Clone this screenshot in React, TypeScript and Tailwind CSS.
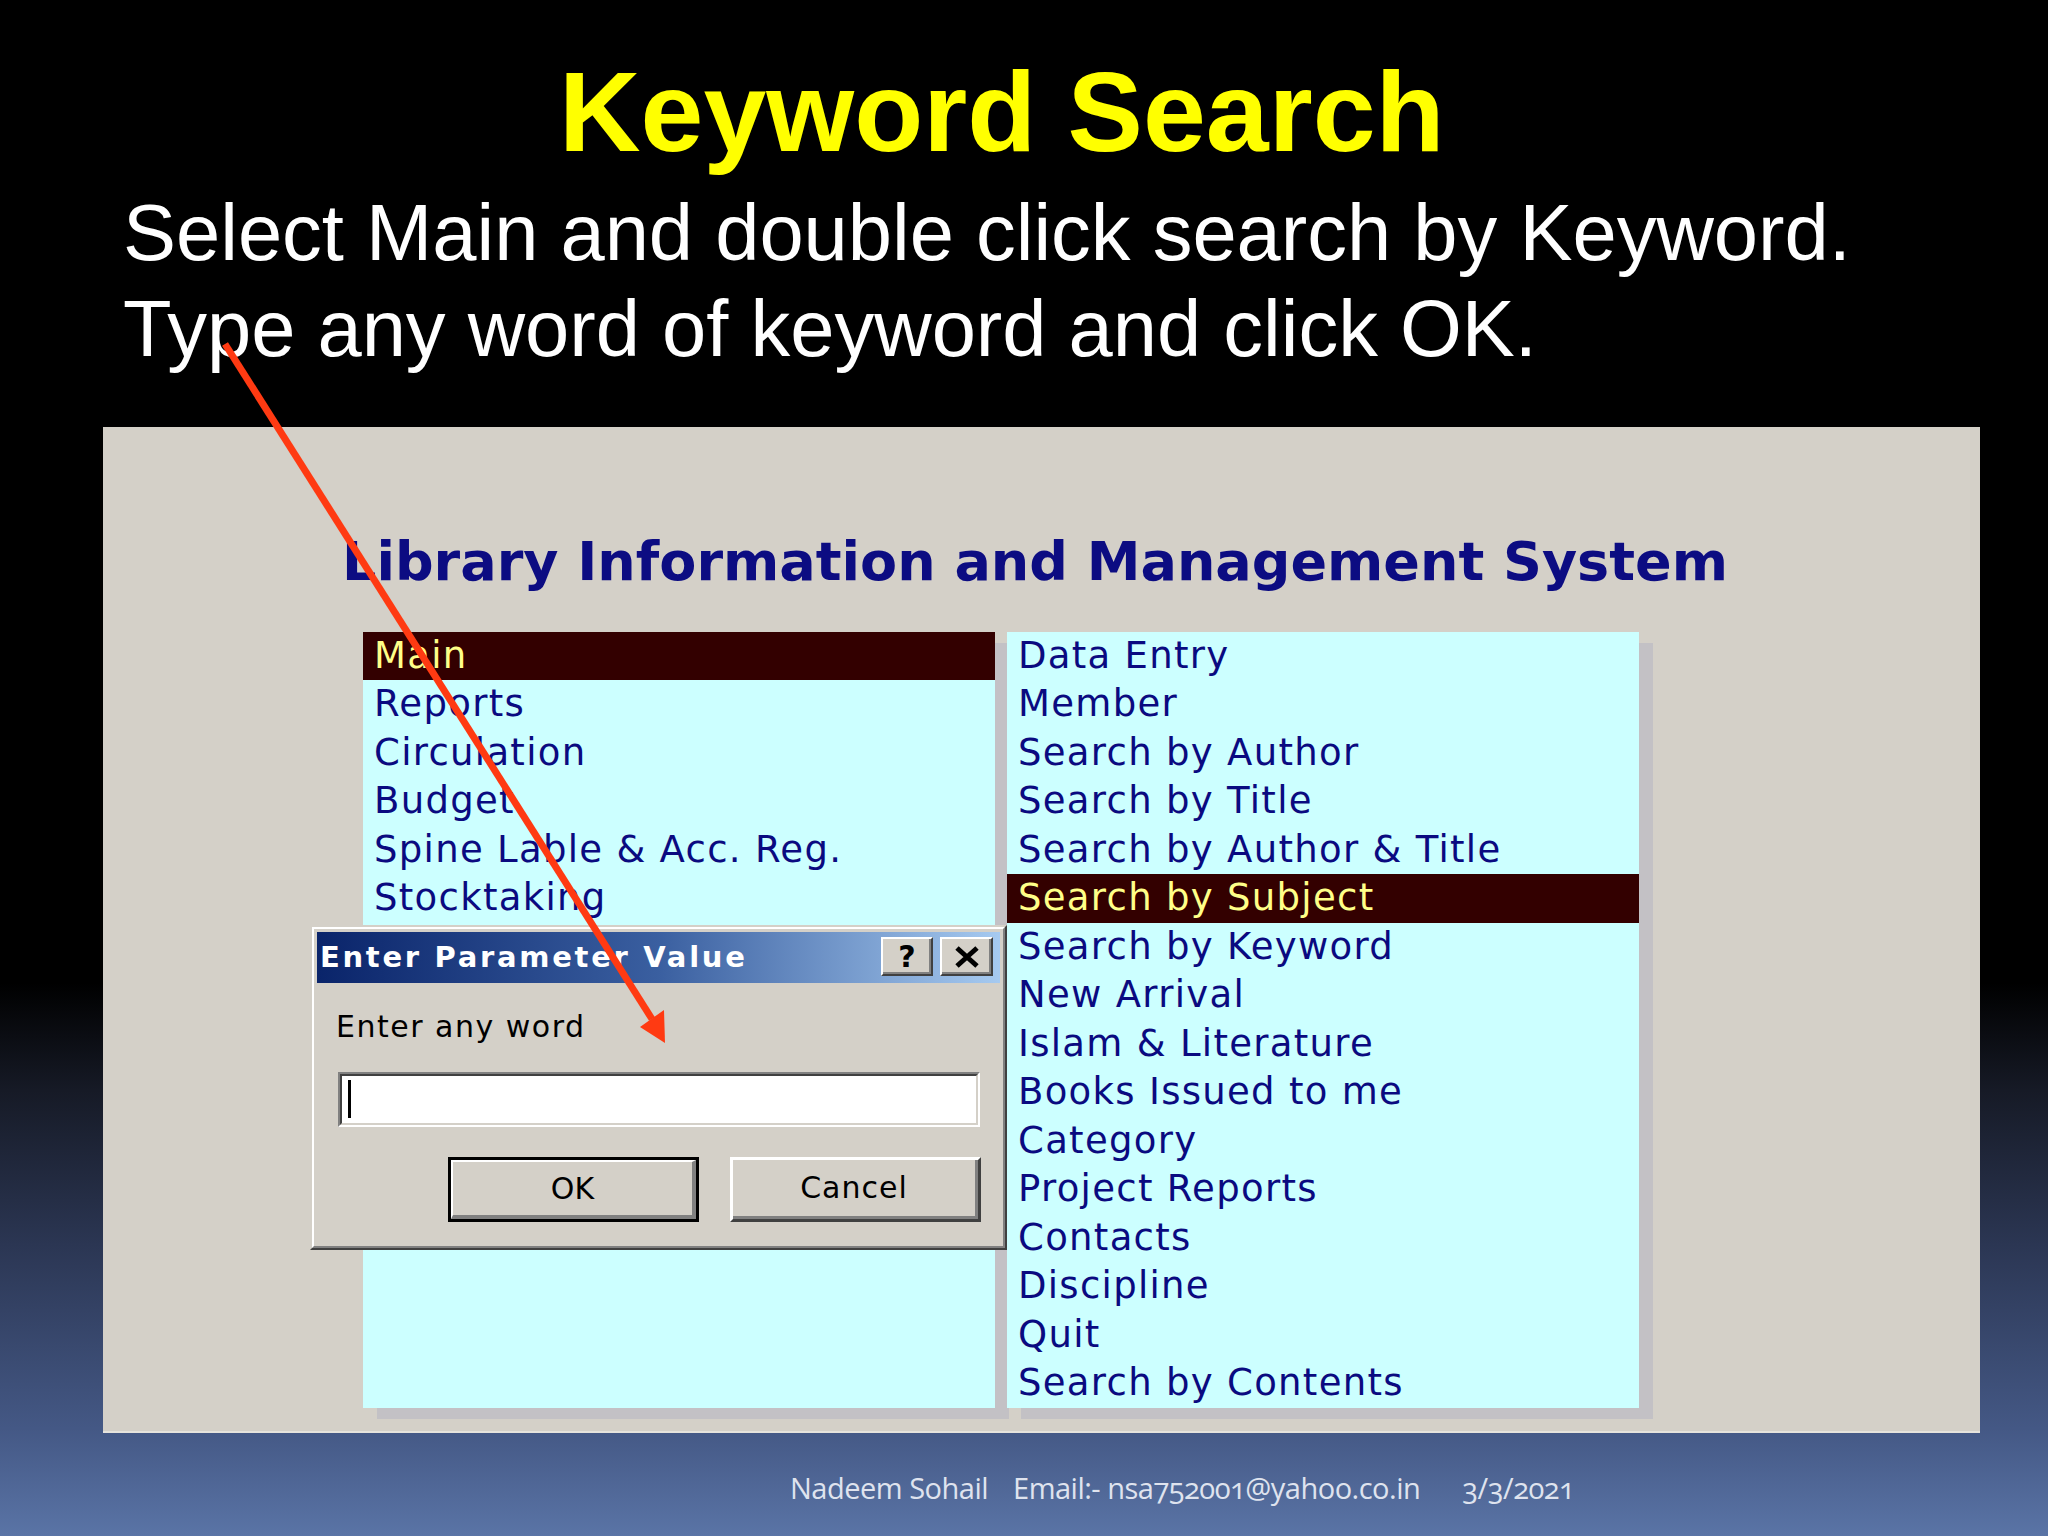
import React from "react";

const leftItems = ["Main", "Reports", "Circulation", "Budget", "Spine Lable & Acc. Reg.", "Stocktaking"];
const rightItems = [
  "Data Entry",
  "Member",
  "Search by Author",
  "Search by Title",
  "Search by Author & Title",
  "Search by Subject",
  "Search by Keyword",
  "New Arrival",
  "Islam & Literature",
  "Books Issued to me",
  "Category",
  "Project Reports",
  "Contacts",
  "Discipline",
  "Quit",
  "Search by Contents",
];

function ListBox({ items, selected }: { items: string[]; selected: number }) {
  return (
    <div className="w-[632px] h-[776px] bg-[#ccffff] shadow-[14px_11px_0_#c3c1c5] flex flex-col">
      {items.map((t, i) => (
        <div
          key={t}
          className={
            i === selected
              ? "h-[48.5px] leading-[48.5px] pl-[11px] bg-[#330000] text-[#ffff88] whitespace-nowrap"
              : "h-[48.5px] leading-[48.5px] pl-[11px] text-[#0a0a80] whitespace-nowrap"
          }
        >
          {t}
        </div>
      ))}
    </div>
  );
}

export default function App() {
  return (
    <div className="relative w-[2048px] h-[1536px] overflow-hidden bg-[linear-gradient(to_bottom,#000_0%,#000_64%,#161a26_71%,#2b3653_81%,#445885_93%,#5a74a6_100%)]">
      <div className="pt-[55.5px] pl-[559px]">
        <h1 className="font-['Liberation_Sans',Arial,sans-serif] font-bold text-[113px] leading-[113px] text-[#ffff00] whitespace-nowrap">
          Keyword Search
        </h1>
      </div>
      <div className="mt-[16px] pl-[123px] font-['Liberation_Sans',Arial,sans-serif] text-[79.5px] leading-[96px] text-white whitespace-nowrap">
        <p>Select Main and double click search by Keyword.</p>
        <p>Type any word of keyword and click OK.</p>
      </div>

      <div className="relative mt-[50.5px] ml-[103px] w-[1877px] h-[1006px] bg-[#d4d0c8] border-b-2 border-[#e6e3dc]">
        <div className="pt-[108.4px] pl-[239px]">
          <h2 className="font-['DejaVu_Sans',Verdana,sans-serif] font-bold text-[54px] leading-[54px] text-[#0c0c82] whitespace-nowrap">
            Library Information and Management System
          </h2>
        </div>
        <div className="mt-[42.6px] ml-[260px] flex gap-3 font-['DejaVu_Sans',Verdana,sans-serif] text-[37px] tracking-[1.3px]">
          <ListBox items={leftItems} selected={0} />
          <ListBox items={rightItems} selected={5} />
        </div>

        {/* Dialog */}
        <div className="absolute left-[207px] top-[498px] w-[697px] border-2 border-t-[#d4d0c8] border-l-[#d4d0c8] border-r-[#404040] border-b-[#404040] bg-[#d4d0c8] font-['DejaVu_Sans',Verdana,sans-serif]">
          <div className="border-2 border-t-white border-l-white border-r-[#808080] border-b-[#808080] p-[3px]">
            <div className="h-[51px] flex items-start bg-[linear-gradient(to_right,#0a246a,#3a5fa0_50%,#a6caf0)]">
              <span className="pl-[3px] leading-[51px] text-[29px] font-bold text-white tracking-[2.7px] whitespace-nowrap">
                Enter Parameter Value
              </span>
              <div className="ml-auto mr-[7px] mt-[5px] flex gap-[7px]">
                <div className="w-[52px] h-[39px] bg-[#d4d0c8] border-2 border-t-white border-l-white border-r-[#404040] border-b-[#404040] shadow-[inset_-2px_-2px_0_#808080] flex items-center justify-center">
                  <span className="text-[30px] font-bold leading-none text-black">?</span>
                </div>
                <div className="w-[53px] h-[39px] bg-[#d4d0c8] border-2 border-t-white border-l-white border-r-[#404040] border-b-[#404040] shadow-[inset_-2px_-2px_0_#808080] flex items-center justify-center">
                  <svg width="26" height="22" viewBox="0 0 26 22">
                    <path d="M3 2 L23 20 M23 2 L3 20" stroke="#000" strokeWidth="5" fill="none" />
                  </svg>
                </div>
              </div>
            </div>
            <div className="px-[19px] pb-[21px]">
              <div className="mt-[25.6px] text-[30px] leading-[36px] tracking-[1.5px] text-black whitespace-nowrap">
                Enter any word
              </div>
              <div className="mt-[27.4px] ml-[2px] w-[642px] h-[55px] border-2 border-t-[#808080] border-l-[#808080] border-r-white border-b-white">
                <div className="h-full border-2 border-t-[#404040] border-l-[#404040] border-r-[#d4d0c8] border-b-[#d4d0c8] bg-white flex items-center pl-[6px]">
                  <div className="w-[3px] h-[38px] bg-black" />
                </div>
              </div>
              <div className="mt-[30px] flex justify-end gap-[31px]">
                <div className="w-[251px] h-[65px] border-[3px] border-black">
                  <div className="h-full border-2 border-t-white border-l-white border-r-[#808080] border-b-[#808080] border-r-[4px] border-b-[4px] flex items-center justify-center text-[30px] text-black">
                    OK
                  </div>
                </div>
                <div className="w-[251px] h-[65px] border-[3px] border-t-white border-l-white border-r-[#404040] border-b-[#404040]">
                  <div className="h-full border-r-[3px] border-b-[3px] border-[#808080] flex items-center justify-center text-[30px] text-black tracking-[1px]">
                    Cancel
                  </div>
                </div>
              </div>
            </div>
          </div>
        </div>
      </div>

      <div className="mt-[40px] pl-[790px] font-['Open_Sans',sans-serif] text-[29px] leading-[29px] text-[#dfe3ee] whitespace-nowrap oldstyle-nums tracking-[-0.5px] flex">
        <span>Nadeem Sohail</span>
        <span className="ml-[25px]">Email:- nsa752001@yahoo.co.in</span>
        <span className="ml-[42px]">3/3/2021</span>
      </div>

      <svg className="absolute inset-0 pointer-events-none" width="2048" height="1536" viewBox="0 0 2048 1536">
        <line x1="225" y1="344" x2="652" y2="1019" stroke="#ff3a12" strokeWidth="7" />
        <polygon points="665,1043 640,1027 664,1010" fill="#ff3a12" />
      </svg>
    </div>
  );
}
